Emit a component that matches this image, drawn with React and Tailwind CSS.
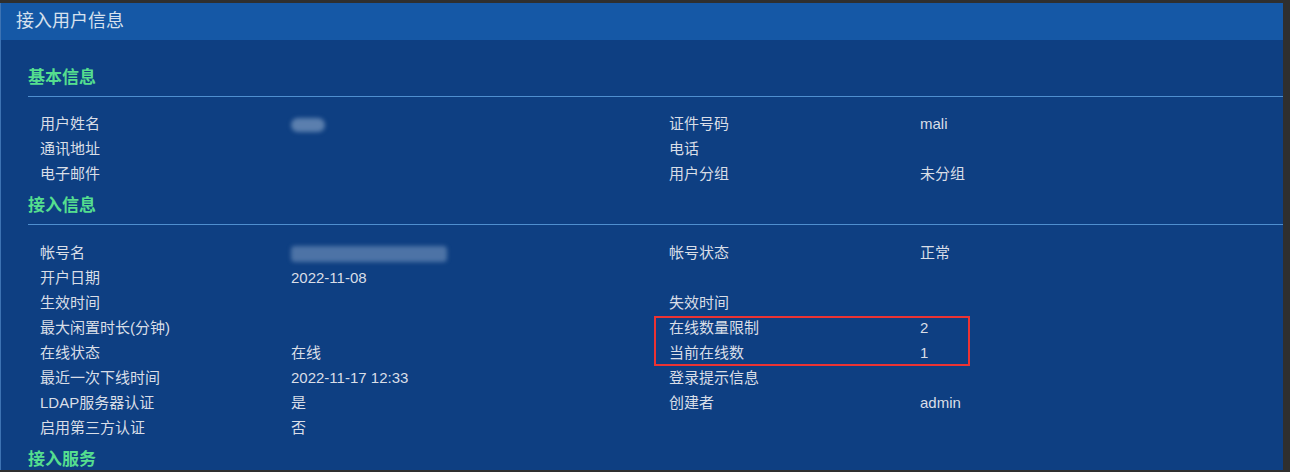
const basic = [
  ["用户姓名", "blur-sm", "证件号码", "mali"],
  ["通讯地址", "", "电话", ""],
  ["电子邮件", "", "用户分组", "未分组"],
];

const access = [
  ["帐号名", "blur-lg", "帐号状态", "正常"],
  ["开户日期", "2022-11-08", "", ""],
  ["生效时间", "", "失效时间", ""],
  ["最大闲置时长(分钟)", "", "在线数量限制", "2"],
  ["在线状态", "在线", "当前在线数", "1"],
  ["最近一次下线时间", "2022-11-17 12:33", "登录提示信息", ""],
  ["LDAP服务器认证", "是", "创建者", "admin"],
  ["启用第三方认证", "否", "", ""],
];

function Value({ v }) {
  if (v === "blur-sm") {
    return (
      <span className="inline-block h-[14px] w-[34px] rounded-full bg-[#5b7fae] blur-[2px]" />
    );
  }
  if (v === "blur-lg") {
    return (
      <span className="inline-block h-[16px] w-[156px] rounded-sm bg-[#4d73a6] blur-[2px]" />
    );
  }
  return v;
}

function Row({ row }) {
  return (
    <div className="grid h-[25px] grid-cols-[251px_378px_251px_1fr] items-center pl-3">
      <span>{row[0]}</span>
      <span className="flex items-center">
        <Value v={row[1]} />
      </span>
      <span>{row[2]}</span>
      <span>{row[3]}</span>
    </div>
  );
}

function Heading({ children }) {
  return (
    <div className="border-b border-[#4f8fcf] pb-[6px] text-[17px] font-bold leading-[24px] text-[#55de8f]">
      {children}
    </div>
  );
}

export default function App() {
  return (
    <div
      className="h-[472px] w-[1290px] overflow-hidden bg-[#2f2f2f] pt-[3px] pr-[7px]"
      style={{ fontFamily: '"Liberation Sans", "Noto Sans CJK SC", sans-serif' }}
    >
      <div className="h-[467px] border-l border-[#3d73b3] bg-[#0e3f82]">
        <div className="flex h-[37px] items-center bg-[#1558a6] pl-[15px] text-[18px] text-[#d6e1ee]">
          接入用户信息
        </div>
        <div className="relative pl-[27px] pt-[26px] text-[15px] text-[#d9dee7]">
          <Heading>基本信息</Heading>
          <div className="mt-[15px]">
            {basic.map((r) => (
              <Row key={r[0]} row={r} />
            ))}
          </div>
          <div className="mt-[7px]">
            <Heading>接入信息</Heading>
          </div>
          <div className="relative mt-[16px]">
            {access.map((r) => (
              <Row key={r[0]} row={r} />
            ))}
            <div className="absolute left-[626px] top-[75px] h-[50px] w-[316px] border-2 border-[#ec3333]" />
          </div>
          <div className="mt-[7px] text-[17px] font-bold leading-[24px] text-[#55de8f]">
            接入服务
          </div>
        </div>
      </div>
    </div>
  );
}
